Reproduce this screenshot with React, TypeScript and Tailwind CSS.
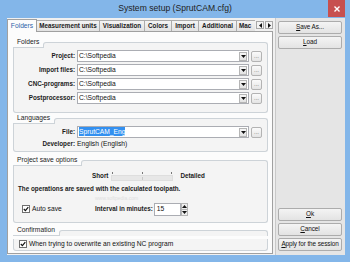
import React from 'react';

const txt = 'text-[6.7px] leading-none';
const bold = 'text-[6.3px] font-bold leading-none text-[#1a1a1a]';

function Arrow({ dir }: { dir: 'up' | 'down' | 'left' | 'right' }) {
  const vertical = dir === 'up' || dir === 'down';
  const pts = {
    down: '0,0 5,0 2.5,3',
    up: '0,3 5,3 2.5,0',
    left: '3,0 3,5 0,2.5',
    right: '0,0 0,5 3,2.5',
  }[dir];
  return (
    <svg width={vertical ? 5 : 3} height={vertical ? 3 : 5} viewBox={vertical ? '0 0 5 3' : '0 0 3 5'}>
      <polygon points={pts} fill="#111" />
    </svg>
  );
}

function CheckBox() {
  return (
    <div className="w-[8px] h-[8px] border border-[#6f6f6f] bg-white flex items-center justify-center shrink-0">
      <svg width="6" height="6" viewBox="0 0 6 6">
        <path d="M0.8 3 L2.4 4.6 L5.3 1.2" stroke="#111" strokeWidth="1.2" fill="none" />
      </svg>
    </div>
  );
}

function Combo({ value, selected = false }: { value: string; selected?: boolean }) {
  return (
    <div className="flex-1 h-[12px] ml-[1px] bg-white border border-[#abadb3] flex items-center">
      <div className={`flex-1 pl-[1px] ${txt}`}>
        {selected ? <span className="bg-[#3390f0] text-white py-[1px]">{value}</span> : value}
      </div>
      <div className="w-[8px] h-[9px] mr-[1px] border border-[#b5b5b5] bg-gradient-to-b from-[#f7f7f7] to-[#e2e2e2] flex items-center justify-center">
        <Arrow dir="down" />
      </div>
    </div>
  );
}

function DotsButton() {
  return (
    <div className="w-[11px] h-[11px] ml-[2px] border border-[#b3b3b3] rounded-[2px] bg-gradient-to-b from-[#fbfbfb] to-[#e4e4e4] flex items-end justify-center pb-[2px] text-[6px] leading-none text-[#666]">
      ...
    </div>
  );
}

function Group({ title, className = '', children }: { title: string; className?: string; children: React.ReactNode }) {
  return (
    <div className={className}>
      <div className="flex items-end h-[11px]">
        <div className={`border-b border-[#cdd3d8] pl-[4px] pr-[4px] h-[10px] flex items-center ${txt} text-[#222]`}>
          {title}
        </div>
        <div className="flex-1 h-[6px] border-t border-l border-r border-[#cdd3d8] rounded-t-[3px] bg-[#f4f4f4]" />
      </div>
      <div className="border-l border-r border-b border-[#cdd3d8] rounded-b-[3px] bg-[#f4f4f4]">{children}</div>
    </div>
  );
}

function FolderRow({ label, value, selected }: { label: string; value: string; selected?: boolean }) {
  return (
    <div className="flex items-center h-[12px] pr-[5px]">
      <div className={`w-[62px] text-right pr-[1px] ${bold}`}>{label}</div>
      <Combo value={value} selected={selected} />
      <DotsButton />
    </div>
  );
}

function Button({ hot, rest }: { hot: string; rest: string }) {
  return (
    <div className="h-[13px] w-[64px] ml-[2px] border border-[#acacac] rounded-[2px] bg-gradient-to-b from-[#f4f4f4] to-[#e3e3e3] flex items-center justify-center whitespace-nowrap text-[6.4px] tracking-[-0.1px] leading-none text-[#111]">
      <span className="underline">{hot}</span>
      {rest}
    </div>
  );
}

const tabs = [
  { name: 'Measurement units', cls: 'w-[64px]' },
  { name: 'Visualization', cls: 'w-[46px]' },
  { name: 'Colors', cls: 'w-[28px]' },
  { name: 'Import', cls: 'w-[28px]' },
  { name: 'Additional', cls: 'w-[39px]' },
];

export default function App() {
  return (
    <div className="w-[350px] h-[262px] bg-[#83b6e9] flex flex-col overflow-hidden font-['Liberation_Sans',Arial,sans-serif] text-[#111]">
      {/* title bar */}
      <div className="h-[18px] flex shrink-0">
        <div className="flex-1 pl-[22px] text-center text-[8.6px] leading-[17px] text-[#222]">System setup (SprutCAM.cfg)</div>
        <div className="w-[17px] h-[17px] mr-[5px] bg-[#c7504f] flex items-center justify-center">
          <svg width="6" height="6" viewBox="0 0 6 6">
            <path d="M0.5 0.5 L5.5 5.5 M5.5 0.5 L0.5 5.5" stroke="#fff" strokeWidth="1.4" />
          </svg>
        </div>
      </div>

      {/* client */}
      <div className="flex-1 flex ml-[7px] mr-[5px] mb-[7px] bg-[#f0f0f0]">
        {/* tab control */}
        <div className="w-[266px] flex flex-col pt-[1px] pb-[1px]">
          <div className="flex items-end">
            <div className="w-[30px] h-[13px] -mb-px relative bg-[#fcfcfc] border border-b-0 border-[#a0a0a0] flex items-center justify-center text-[6.7px] leading-none text-[#2f62a8]">
              Folders
            </div>
            {tabs.map((t) => (
              <div
                key={t.name}
                className={`${t.cls} -ml-px h-[11px] border border-b-0 border-[#acacac] bg-gradient-to-b from-[#f4f4f4] to-[#e2e2e2] flex items-center justify-center ${bold}`}
              >
                {t.name}
              </div>
            ))}
            <div className="w-[19px] -ml-px h-[11px] border-l border-t border-[#acacac] bg-gradient-to-b from-[#f4f4f4] to-[#e2e2e2] flex items-center pl-[2px] overflow-hidden whitespace-nowrap">
              <span className={bold}>Mac</span>
            </div>
            <div className="w-[8px] h-[8px] mb-[2px] ml-[1px] border border-[#a8a8a8] bg-[#f3f3f3] flex items-center justify-center">
              <Arrow dir="left" />
            </div>
            <div className="w-[8px] h-[8px] mb-[2px] ml-[1px] border border-[#a8a8a8] bg-[#f3f3f3] flex items-center justify-center">
              <Arrow dir="right" />
            </div>
          </div>

          {/* tab page */}
          <div className="flex-1 border border-[#a0a0a0] bg-[#fcfcfc] pl-[5px] pr-[4px] pt-[5px]">
            <Group title="Folders">
              <div className="flex flex-col gap-[2px] pt-[2px] pb-[8px]">
                <FolderRow label="Project:" value="C:\Softpedia" />
                <FolderRow label="Import files:" value="C:\Softpedia" />
                <FolderRow label="CNC-programs:" value="C:\Softpedia" />
                <FolderRow label="Postprocessor:" value="C:\Softpedia" />
              </div>
            </Group>

            <Group title="Languages">
              <div className="flex flex-col gap-[1px] pt-[2px] pb-[2px]">
                <FolderRow label="File:" value="SprutCAM_Eng" selected />
                <div className="flex items-center h-[10px]">
                  <div className={`w-[62px] text-right pr-[1px] ${bold}`}>Developer:</div>
                  <div className={`ml-[1px] ${txt}`}>English (English)</div>
                </div>
              </div>
            </Group>

            <Group title="Project save options" className="mt-[3px]">
              <div className="flex flex-col pt-[5px] pb-[6px]">
                <div className="flex items-center h-[11px] pl-[78px]">
                  <div className={bold}>Short</div>
                  <div className="w-[62px] ml-[3px] flex flex-col">
                    <div className="flex justify-between h-[3px] px-[1px]">
                      <div className="w-px h-[2px] bg-[#777]" />
                      <div className="w-px h-[2px] bg-[#777]" />
                      <div className="w-px h-[2px] bg-[#777]" />
                    </div>
                    <div className="h-[6px] bg-[#e7e7e7] border border-[#dedede] flex justify-center items-center">
                      <div className="w-px h-[3px] bg-[#c8c8c8]" />
                    </div>
                  </div>
                  <div className={`ml-[7px] ${bold}`}>Detailed</div>
                </div>
                <div className={`h-[10px] mt-[2px] pl-[4px] flex items-center ${bold}`}>
                  The operations are saved with the calculated toolpath.
                </div>
                <div className="h-[8px] pl-[81px] flex items-center text-[5px] leading-none text-[#e0e0e0]">
                  www.softpedia.com
                </div>
                <div className="flex items-center h-[14px]">
                  <div className="w-[81px] pl-[8px] flex items-center gap-[2px]">
                    <CheckBox />
                    <span className={txt}>Auto save</span>
                  </div>
                  <div className={bold}>Interval in minutes:</div>
                  <div className="w-[27px] h-[13px] ml-[1px] bg-white border border-[#abadb3] flex items-center pl-[2px]">
                    <span className={txt}>15</span>
                  </div>
                  <div className="w-[7px] h-[13px] flex flex-col">
                    <div className="flex-1 border border-[#b5b5b5] bg-[#efefef] flex items-center justify-center">
                      <Arrow dir="up" />
                    </div>
                    <div className="flex-1 border border-t-0 border-[#b5b5b5] bg-[#efefef] flex items-center justify-center">
                      <Arrow dir="down" />
                    </div>
                  </div>
                </div>
              </div>
            </Group>

            <Group title="Confirmation" className="mt-[2px]">
              <div className="flex items-center h-[10px] mt-[3px] mb-[1px] pl-[5px] gap-[2px]">
                <CheckBox />
                <span className={txt}>When trying to overwrite an existing NC program</span>
              </div>
            </Group>
          </div>
        </div>

        {/* button panel */}
        <div className="w-[70px] ml-[2px] bg-[#e5e5e5] border-l border-[#c9c9c9] flex flex-col pt-[3px] pb-[4px]">
          <div className="flex flex-col gap-[2px]">
            <Button hot="S" rest="ave As..." />
            <Button hot="L" rest="oad" />
          </div>
          <div className="flex-1" />
          <div className="flex flex-col gap-[2px]">
            <Button hot="O" rest="k" />
            <Button hot="C" rest="ancel" />
            <Button hot="A" rest="pply for the session" />
          </div>
        </div>
      </div>
    </div>
  );
}
